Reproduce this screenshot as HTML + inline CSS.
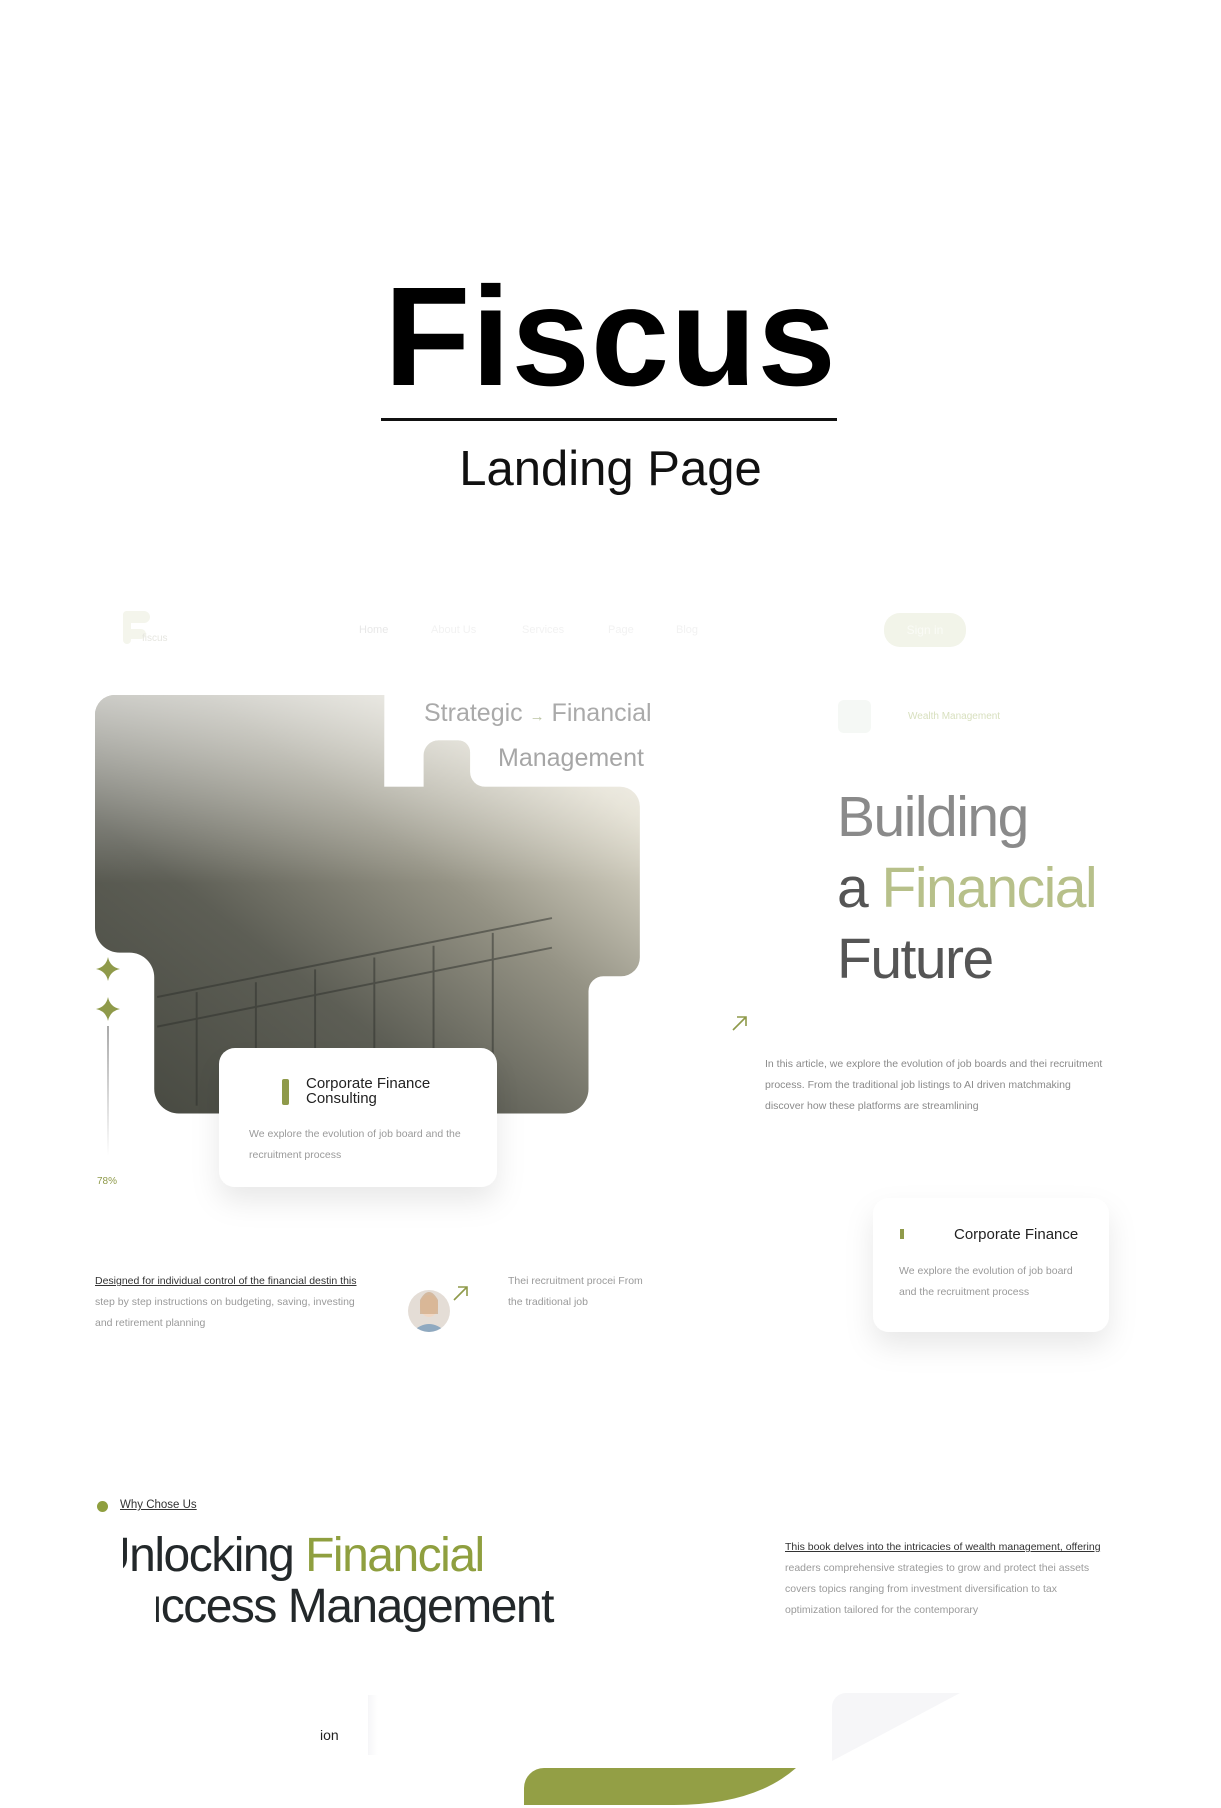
<!DOCTYPE html>
<html><head><meta charset="utf-8">
<style>
*{margin:0;padding:0;box-sizing:border-box}
body{width:1221px;height:1800px;background:#fff;position:relative;overflow:hidden;font-family:"Liberation Sans",sans-serif}
.a{position:absolute;white-space:nowrap}
.sm{font-size:10.5px;color:#9a9a9a}
</style></head><body>
<div class="a" style="left:0;width:1221px;top:261px;text-align:center;font-size:141px;font-weight:bold;color:#000;letter-spacing:1px;line-height:150px">Fiscus</div>
<div class="a" style="left:381px;top:418px;width:456px;height:3px;background:#111"></div>
<div class="a" style="left:0;width:1221px;top:441px;text-align:center;font-size:49px;color:#111;line-height:56px">Landing Page</div>

<svg class="a" style="left:122px;top:611px" width="28" height="34"><path d="M4 0h18a6 6 0 0 1 0 12H9v6h10a5 5 0 0 1 0 10H9v1a4 4 0 0 1-8 0V4a4 4 0 0 1 3-4z" fill="#f4f5ec"/></svg>
<div class="a" style="left:142px;top:633px;font-size:10px;color:#e6e6e0">fiscus</div>
<div class="a" style="left:359px;top:624px;font-size:11px;color:#e8e8e8">Home</div>
<div class="a" style="left:431px;top:624px;font-size:11px;color:#f2f2f2">About Us</div>
<div class="a" style="left:522px;top:624px;font-size:11px;color:#f2f2f2">Services</div>
<div class="a" style="left:608px;top:624px;font-size:11px;color:#f2f2f2">Page</div>
<div class="a" style="left:676px;top:624px;font-size:11px;color:#f2f2f2">Blog</div>
<div class="a" style="left:884px;top:613px;width:82px;height:34px;border-radius:16px;background:#f2f4e9;color:#fafbf6;font-size:12px;text-align:center;line-height:34px">Sign in</div>

<svg class="a" style="left:0;top:0" width="1221" height="1800">
<defs>
<linearGradient id="g" x1="0" y1="1" x2="1" y2="0">
<stop offset="0" stop-color="#45473f"/><stop offset="0.35" stop-color="#5d5e55"/><stop offset="0.6" stop-color="#959385"/><stop offset="0.85" stop-color="#e0dccd"/><stop offset="1" stop-color="#f7f4eb"/></linearGradient>
<linearGradient id="fog" x1="0" y1="0" x2="0" y2="1"><stop offset="0" stop-color="#fff" stop-opacity=".6"/><stop offset=".45" stop-color="#fff" stop-opacity="0"/></linearGradient>
<linearGradient id="gr" x1="0" y1="0" x2="0" y2="1"><stop offset="0" stop-color="#555"/><stop offset="1" stop-color="#fff"/></linearGradient>
<filter id="sh" x="-30%" y="-30%" width="160%" height="180%"><feDropShadow dx="0" dy="14" stdDeviation="14" flood-color="#000" flood-opacity=".09"/></filter>
<clipPath id="av"><circle cx="429" cy="1311" r="21"/></clipPath>
</defs>
<g transform="translate(95 695) scale(0.987) translate(-97 -704)">
<path d="M117 704H390V797H430V765a15 15 0 0 1 15-15h20a12 12 0 0 1 12 12v20a15 15 0 0 0 15 15h137a20 20 0 0 1 20 20V970a19 19 0 0 1-19 19h-18a15 15 0 0 0-15 15V1103a25 25 0 0 1-25 25H182a25 25 0 0 1-25-25V990a25 25 0 0 0-25-25h-10a25 25 0 0 1-25-25V724a20 20 0 0 1 20-20z" fill="url(#g)"/>
<path d="M117 704H390V797H430V765a15 15 0 0 1 15-15h20a12 12 0 0 1 12 12v20a15 15 0 0 0 15 15h137a20 20 0 0 1 20 20V970a19 19 0 0 1-19 19h-18a15 15 0 0 0-15 15V1103a25 25 0 0 1-25 25H182a25 25 0 0 1-25-25V990a25 25 0 0 0-25-25h-10a25 25 0 0 1-25-25V724a20 20 0 0 1 20-20z" fill="url(#fog)"/>
<g stroke="#2e302c" stroke-width="2" opacity=".5">
<line x1="160" y1="1010" x2="560" y2="930"/><line x1="160" y1="1040" x2="560" y2="960"/>
<line x1="200" y1="1005" x2="200" y2="1120"/><line x1="260" y1="995" x2="260" y2="1120"/><line x1="320" y1="982" x2="320" y2="1120"/><line x1="380" y1="970" x2="380" y2="1120"/><line x1="440" y1="958" x2="440" y2="1120"/><line x1="500" y1="945" x2="500" y2="1120"/>
</g>
</g>
<rect x="219" y="1048" width="278" height="139" rx="16" fill="#fff" filter="url(#sh)"/>
<rect x="873" y="1198" width="236" height="134" rx="16" fill="#fff" filter="url(#sh)"/>
<rect x="838" y="700" width="33" height="33" rx="6" fill="#f5f8f5"/>
<path d="M108 957q2 10 12 12q-10 2-12 12q-2-10-12-12q10-2 12-12zM108 997q2 10 12 12q-10 2-12 12q-2-10-12-12q10-2 12-12z" fill="#8f9a4a"/>
<rect x="107.5" y="1026" width="1" height="130" fill="url(#gr)"/>
<rect x="282" y="1079" width="7" height="26" rx="2" fill="#8f9a4a"/>
<rect x="900" y="1229" width="4" height="10" fill="#8f9a4a"/>
<path d="M733 1030l13-13M737 1017h9v9" stroke="#8f9a4a" stroke-width="1.6" fill="none"/>
<path d="M454 1300l13-13M458 1287h9v9" stroke="#8f9a4a" stroke-width="1.6" fill="none"/>
<g clip-path="url(#av)"><rect x="405" y="1288" width="50" height="50" fill="#e4ddd6"/><ellipse cx="429" cy="1306" rx="9" ry="11" fill="#f0d7c3"/><path d="M420 1300q9-16 18 0v14h-18z" fill="#c9a27a" opacity=".6"/><path d="M412 1332q17-16 34 0v8h-34z" fill="#8fa9c0"/></g>
</svg>
<div class="a" style="left:424px;top:699px;font-size:25px;color:#aaa">Strategic <span style="font-size:15px;color:#bcc5a6">→</span> Financial</div>
<div class="a" style="left:498px;top:744px;font-size:25px;color:#a6a6a6">Management</div>
<div class="a" style="left:306px;top:1076px;font-size:15px;color:#222;line-height:15px">Corporate Finance<br>Consulting</div>
<div class="a sm" style="left:249px;top:1124px;line-height:21px">We explore the evolution of job board and the<br>recruitment process</div>
<div class="a" style="left:97px;top:1176px;font-size:10px;color:#8f9a4a">78%</div>

<div class="a" style="left:908px;top:711px;font-size:10px;color:#d8e0bf">Wealth Management</div>
<div class="a" style="left:837px;top:782px;font-size:57px;line-height:71px;letter-spacing:-1.5px;color:#8a8a8a">Building<br><span style="color:#555">a</span> <span style="color:#b7c08a">Financial</span><br><span style="color:#555">Future</span></div>
<div class="a sm" style="left:765px;top:1054px;line-height:21px;color:#8a8a8a">In this article, we explore the evolution of job boards and thei recruitment<br>process. From the traditional job listings to AI driven matchmaking<br>discover how these platforms are streamlining</div>

<div class="a" style="left:954px;top:1226px;font-size:15px;color:#222">Corporate Finance</div>
<div class="a sm" style="left:899px;top:1261px;line-height:21px">We explore the evolution of job board<br>and the recruitment process</div>

<div class="a sm" style="left:95px;top:1271px;line-height:21px"><span style="color:#333;text-decoration:underline">Designed for individual control of the financial destin this</span><br>step by step instructions on budgeting, saving, investing<br>and retirement planning</div>
<div class="a sm" style="left:508px;top:1271px;line-height:21px">Thei recruitment procei From<br>the traditional job</div>

<div class="a" style="left:97px;top:1501px;width:11px;height:11px;border-radius:50%;background:#8f9f3f"></div>
<div class="a" style="left:120px;top:1499px;font-size:11.5px;color:#333;text-decoration:underline">Why Chose Us</div>
<div class="a" style="left:96px;top:1529px;font-size:48px;line-height:54px;letter-spacing:-1.5px;color:#23282a">Unlocking <span style="color:#8f9f3f">Financial</span></div>
<div class="a" style="left:105px;top:1580px;font-size:48px;line-height:54px;letter-spacing:-1.5px;color:#23282a">Success Management</div>
<div class="a" style="left:80px;top:1527px;width:43px;height:56px;background:#fff"></div>
<div class="a" style="left:80px;top:1583px;width:76px;height:56px;background:#fff"></div>
<div class="a sm" style="left:785px;top:1537px;line-height:21px"><span style="color:#333;text-decoration:underline">This book delves into the intricacies of wealth management, offering</span><br>readers comprehensive strategies to grow and protect thei assets<br>covers topics ranging from investment diversification to tax<br>optimization tailored for the contemporary</div>

<div class="a" style="left:320px;top:1727px;font-size:14px;color:#222">ion</div>
<div class="a" style="left:368px;top:1695px;width:10px;height:60px;background:linear-gradient(90deg,#f6f6f8,#fff)"></div>
<svg class="a" style="left:832px;top:1693px" width="130" height="70"><path d="M14 0H128L0 68V14A14 14 0 0 1 14 0z" fill="#f6f6f8"/></svg>
<svg class="a" style="left:524px;top:1768px" width="290" height="40"><path d="M20 0H272Q230 37 150 37H0V20A20 20 0 0 1 20 0z" fill="#939f45"/></svg>
</body></html>
